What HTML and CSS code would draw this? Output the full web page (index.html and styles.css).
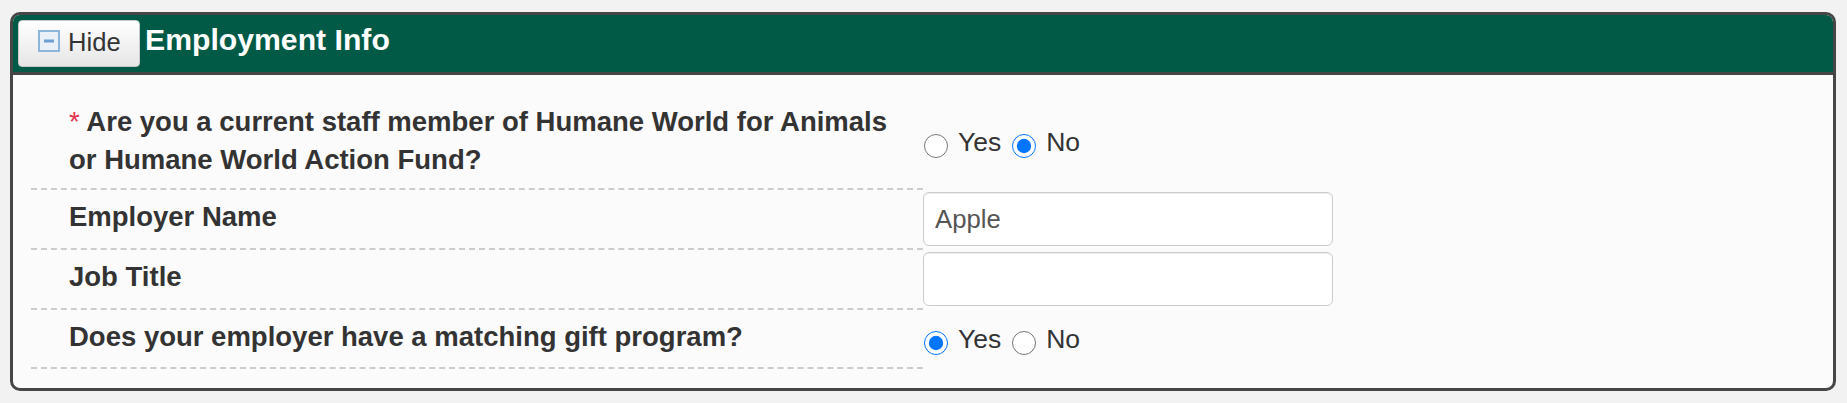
FILE: index.html
```html
<!DOCTYPE html>
<html lang="en">
<head>
<meta charset="utf-8">
<title>Employment Info</title>
<link rel="stylesheet" href="styles.css">
</head>
<body>
<section class="panel">
  <header class="panel-head">
    <button class="toggle" type="button">
      <svg class="toggle-icon" width="22" height="22" viewBox="0 0 22 22" aria-hidden="true">
        <rect x="1" y="1" width="20" height="20" fill="#e9f0f8" stroke="#8cb5da" stroke-width="2"/>
        <rect x="6" y="9.5" width="10" height="3" fill="#6b9fd0"/>
      </svg>
      <span>Hide</span>
    </button>
    <h2 class="panel-title">Employment Info</h2>
  </header>
  <div class="panel-body">
    <div class="row">
      <div class="label"><span class="req">*</span> Are you a current staff member of Humane World for Animals or Humane World Action Fund?</div>
      <div class="field choice">
        <div class="radios">
          <input type="radio" name="staff" id="staff-yes">
          <label for="staff-yes">Yes</label>
          <input type="radio" name="staff" id="staff-no" checked>
          <label for="staff-no">No</label>
        </div>
      </div>
    </div>
    <div class="row">
      <div class="label">Employer Name</div>
      <div class="field">
        <input class="text" type="text" value="Apple">
      </div>
    </div>
    <div class="row">
      <div class="label">Job Title</div>
      <div class="field">
        <input class="text" type="text" value="">
      </div>
    </div>
    <div class="row">
      <div class="label">Does your employer have a matching gift program?</div>
      <div class="field choice">
        <div class="radios">
          <input type="radio" name="match" id="match-yes" checked>
          <label for="match-yes">Yes</label>
          <input type="radio" name="match" id="match-no">
          <label for="match-no">No</label>
        </div>
      </div>
    </div>
  </div>
</section>
</body>
</html>
```
FILE: styles.css
```css
html {
  background: #f2f2f2;
}

body {
  margin: 12px 11px 12px 10px;
  font-family: "Liberation Sans", Arial, sans-serif;
  color: #333;
}

.panel {
  border: 3px solid #464646;
  border-radius: 10px;
  background: #fbfbfb;
  overflow: hidden;
}

.panel-head {
  display: flex;
  align-items: flex-start;
  padding: 5px;
  background: #015a46;
  border-bottom: 3px solid #464646;
}

.toggle {
  display: inline-flex;
  align-items: center;
  gap: 8px;
  box-sizing: border-box;
  width: 122px;
  height: 47px;
  margin: 0;
  padding: 0 0 2px 19px;
  border: 1px solid #c9c9c9;
  border-radius: 4px;
  background: linear-gradient(#ffffff, #e6e6e6);
  font-family: "Liberation Sans", Arial, sans-serif;
  font-size: 25.6px;
  line-height: 29px;
  color: #333;
}

.toggle-icon {
  display: block;
  flex: none;
  margin-bottom: 4px;
}

.panel-title {
  margin: 3px 0 0 5px;
  font-size: 30.2px;
  line-height: 34px;
  font-weight: bold;
  color: #fff;
}

.panel-body {
  padding: 20px 18px 19px;
}

.row {
  display: flex;
  min-height: 59px;
}

.label {
  flex: none;
  box-sizing: border-box;
  width: 892px;
  padding: 8px 20px 9px 38px;
  border-bottom: 2px dashed #cccccc;
  font-size: 27.5px;
  line-height: 38px;
  font-weight: bold;
  color: #333;
}

.req {
  color: #e3344d;
  font-weight: normal;
}

.field {
  flex: 1;
  display: flex;
  padding: 2px 0 4px;
}

.field.choice {
  align-items: center;
}

.text {
  box-sizing: border-box;
  width: 410px;
  height: 54px;
  margin: 0;
  padding: 0 11px;
  border: 1px solid #cccccc;
  border-radius: 6px;
  background: #fff;
  box-shadow: inset 0 1px 1px rgba(0, 0, 0, 0.075);
  font-family: "Liberation Sans", Arial, sans-serif;
  font-size: 25.7px;
  color: #555;
}

.radios {
  display: flex;
  align-items: flex-start;
  padding-top: 2px;
  font-size: 26.5px;
  line-height: 30px;
  color: #333;
}

.radios input {
  width: 24px;
  height: 24px;
  margin: 7px 10px 0 1px;
}

.radios label + input {
  margin-left: 11px;
}
```
